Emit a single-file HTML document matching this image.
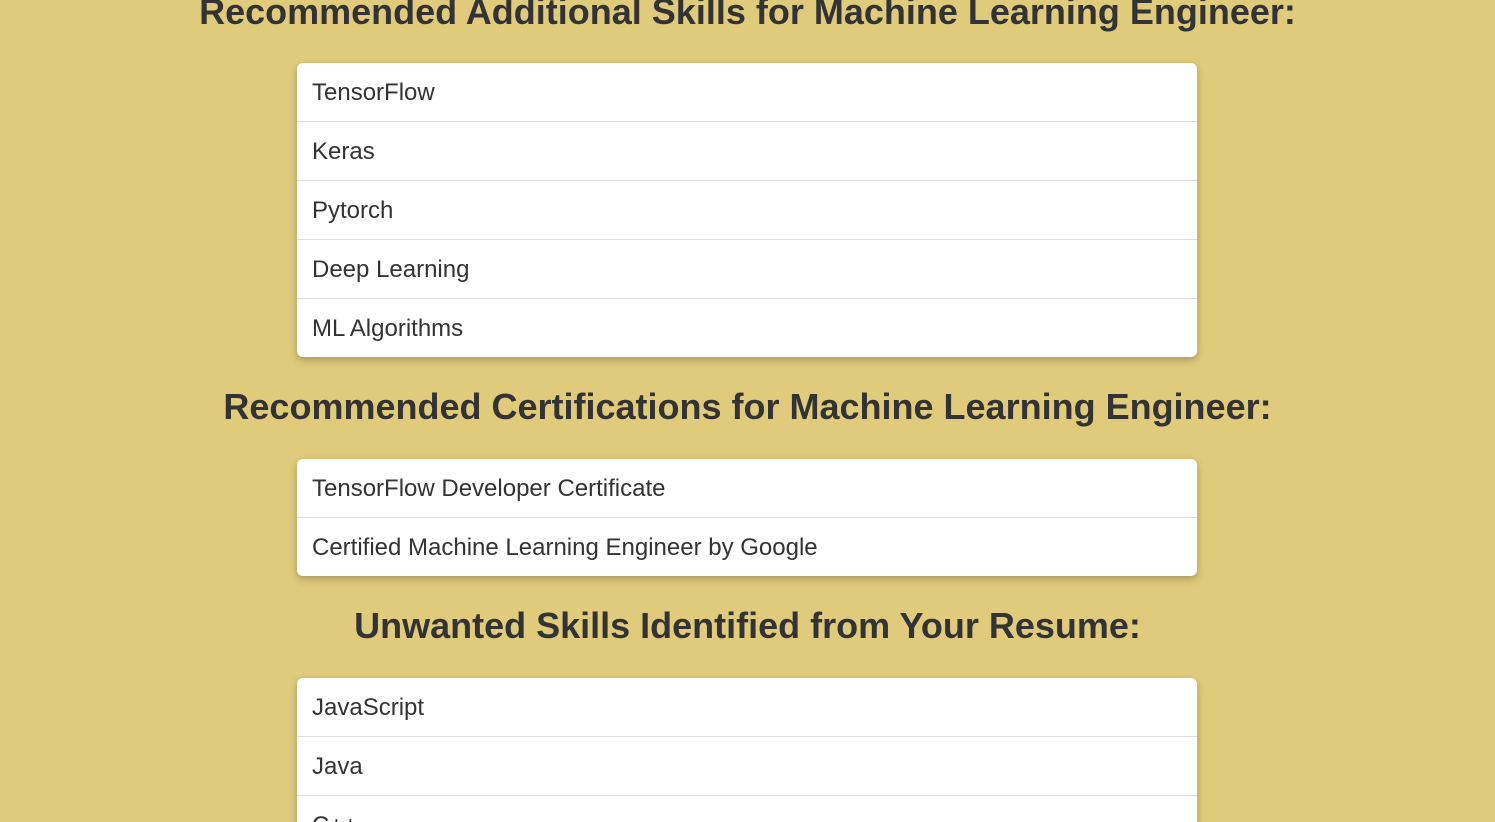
<!DOCTYPE html>
<html><head><style>
html,body{margin:0;height:822px;overflow:hidden}
body{background:#e0ca7c;font-family:"Liberation Sans",Arial,sans-serif;color:#333;width:1495px;position:relative}
h2{position:absolute;left:0;width:1495px;text-align:center;margin:0;font-size:36px;font-weight:bold;line-height:40px}
ul{position:absolute;left:297px;width:900px;margin:0;padding:0;list-style:none;background:#fff;border-radius:6px;box-shadow:0 3px 8px rgba(0,0,0,.25);overflow:hidden}
li{height:58px;line-height:60px;overflow:hidden;padding-left:15px;font-size:24px;border-top:1px solid #ddd}
li:first-child{border-top:none}
</style></head><body>
<h2 style="top:-8px">Recommended Additional Skills for Machine Learning Engineer:</h2>
<ul style="top:63px"><li>TensorFlow</li><li>Keras</li><li>Pytorch</li><li>Deep Learning</li><li>ML Algorithms</li></ul>
<h2 style="top:387px">Recommended Certifications for Machine Learning Engineer:</h2>
<ul style="top:459px"><li>TensorFlow Developer Certificate</li><li>Certified Machine Learning Engineer by Google</li></ul>
<h2 style="top:606px">Unwanted Skills Identified from Your Resume:</h2>
<ul style="top:678px"><li>JavaScript</li><li>Java</li><li>C++</li></ul>
</body></html>
